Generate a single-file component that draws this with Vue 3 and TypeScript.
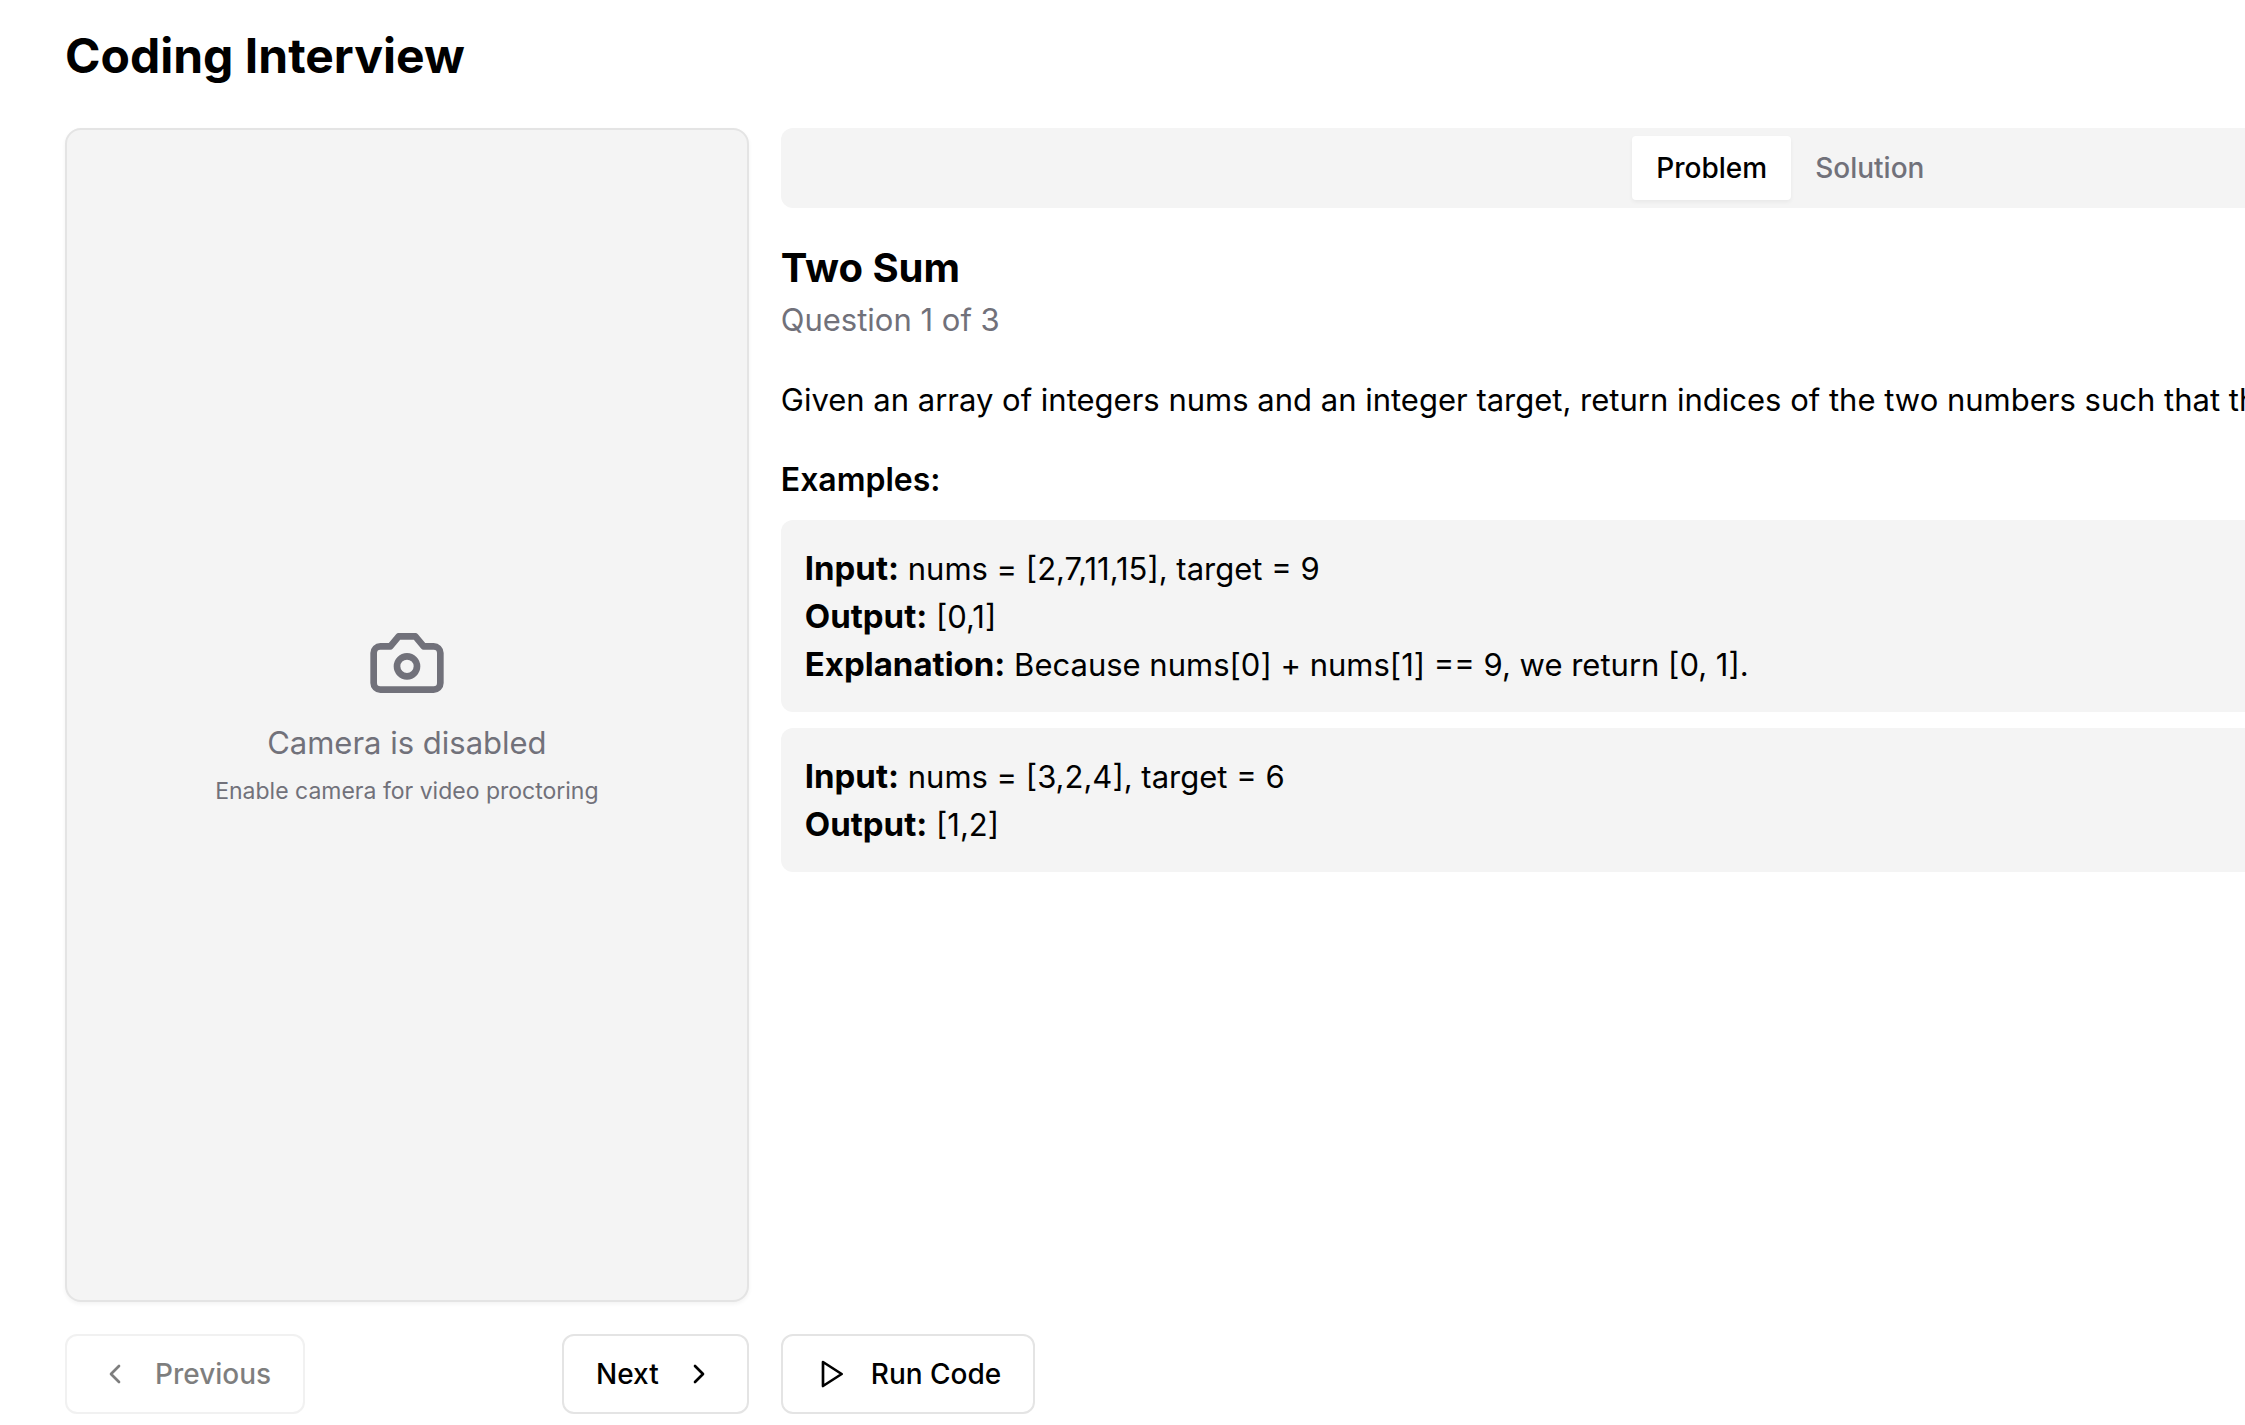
<script setup lang="ts">
import { ref } from 'vue'

interface Example {
  input: string
  output: string
  explanation?: string
}

type Tab = 'Problem' | 'Solution'

const tabs: Tab[] = ['Problem', 'Solution']
const activeTab = ref<Tab>('Problem')

const examples: Example[] = [
  {
    input: 'nums = [2,7,11,15], target = 9',
    output: '[0,1]',
    explanation: 'Because nums[0] + nums[1] == 9, we return [0, 1].',
  },
  { input: 'nums = [3,2,4], target = 6', output: '[1,2]' },
]
</script>

<template>
  <div class="viewport">
    <div class="page">
      <h1 class="title">Coding Interview</h1>

      <main class="columns">
        <section class="side">
          <div class="camera">
            <svg class="camera-icon" viewBox="0 0 24 24" aria-hidden="true">
              <path d="M14.5 4h-5L7 7H4a2 2 0 0 0-2 2v9a2 2 0 0 0 2 2h16a2 2 0 0 0 2-2V9a2 2 0 0 0-2-2h-3l-2.5-3z" />
              <circle cx="12" cy="13" r="3" />
            </svg>
            <p class="camera-title">Camera is disabled</p>
            <p class="camera-note">Enable camera for video proctoring</p>
          </div>
          <div class="nav">
            <button class="btn" type="button" disabled>
              <svg class="icon" viewBox="0 0 24 24" aria-hidden="true"><path d="m15 18-6-6 6-6" /></svg>
              Previous
            </button>
            <button class="btn" type="button">
              Next
              <svg class="icon" viewBox="0 0 24 24" aria-hidden="true"><path d="m9 18 6-6-6-6" /></svg>
            </button>
          </div>
        </section>

        <section class="work">
          <div class="tabs" role="tablist">
            <button
              v-for="tab in tabs"
              :key="tab"
              type="button"
              role="tab"
              class="tab"
              :class="{ active: activeTab === tab }"
              :aria-selected="activeTab === tab"
              @click="activeTab = tab"
            >{{ tab }}</button>
          </div>

          <div class="problem">
            <h2 class="problem-title">Two Sum</h2>
            <p class="progress">Question 1 of 3</p>
            <p class="statement">Given an array of integers nums and an integer target, return indices of the two numbers such that they add up to target.</p>
            <h3 class="examples-title">Examples:</h3>
            <div class="examples">
              <div v-for="example in examples" :key="example.input" class="example">
                <p><strong>Input:</strong> {{ example.input }}</p>
                <p><strong>Output:</strong> {{ example.output }}</p>
                <p v-if="example.explanation"><strong>Explanation:</strong> {{ example.explanation }}</p>
              </div>
            </div>
          </div>

          <div class="actions">
            <button class="btn" type="button">
              <svg class="icon" viewBox="0 0 24 24" aria-hidden="true"><polygon points="6 3 20 12 6 21 6 3" /></svg>
              Run Code
            </button>
          </div>
        </section>
      </main>
    </div>
  </div>
</template>

<style>
body {
  background: #fff;
}
</style>

<style scoped>
.viewport {
  overflow: hidden;
  font-family: Inter, "Liberation Sans", sans-serif;
  font-size: 31px;
  line-height: 48px;
  color: #000;
}

h1,
h2,
h3,
p {
  margin: 0;
}

/* The workspace is wider than the window and runs off its right edge. */
.page {
  box-sizing: border-box;
  width: calc(100% + 620px);
  min-height: 100vh;
  padding: 24px 65px 11px;
  display: flex;
  flex-direction: column;
  gap: 40px;
}

.title {
  font-size: 48px;
  line-height: 64px;
  font-weight: 700;
}

.columns {
  flex: 1;
  display: flex;
  gap: 32px;
}

.side {
  width: 25%;
  display: flex;
  flex-direction: column;
  gap: 32px;
}

.camera {
  flex: 1;
  display: flex;
  flex-direction: column;
  align-items: center;
  justify-content: center;
  border: 2px solid #e4e4e4;
  border-radius: 16px;
  background: #f4f4f4;
  box-shadow: 0 2px 4px rgba(0, 0, 0, 0.05);
  color: #71717a;
}

.camera-icon,
.icon {
  fill: none;
  stroke: currentColor;
  stroke-width: 2;
  stroke-linecap: round;
  stroke-linejoin: round;
}

.camera-icon {
  width: 80px;
  height: 80px;
  margin-bottom: 16px;
}

.camera-note {
  margin-top: 8px;
  font-size: 23px;
  line-height: 32px;
}

.nav {
  display: flex;
  justify-content: space-between;
}

.btn {
  box-sizing: border-box;
  height: 80px;
  padding: 0 32px;
  display: inline-flex;
  align-items: center;
  gap: 24px;
  border: 2px solid #e4e4e4;
  border-radius: 12px;
  background: #fff;
  color: #000;
  font-family: inherit;
  font-size: 28px;
  line-height: 40px;
  font-weight: 500;
}

.btn:disabled {
  opacity: 0.5;
}

.icon {
  width: 32px;
  height: 32px;
}

.work {
  flex: 1;
  display: flex;
  flex-direction: column;
}

.tabs {
  display: flex;
  justify-content: center;
  padding: 8px;
  border-radius: 12px;
  background: #f4f4f4;
}

.tab {
  padding: 12px 24px;
  border: 0;
  border-radius: 4px;
  background: transparent;
  color: #71717a;
  font-family: inherit;
  font-size: 28px;
  line-height: 40px;
  font-weight: 500;
}

.tab.active {
  background: #fff;
  color: #000;
  box-shadow: 0 2px 4px rgba(0, 0, 0, 0.05);
}

.problem {
  flex: 1;
  padding-top: 32px;
}

.problem-title {
  font-size: 40px;
  line-height: 56px;
  font-weight: 700;
}

.progress {
  color: #71717a;
}

.statement {
  margin: 32px 0;
}

.examples-title {
  margin-bottom: 16px;
  font-size: 32px;
  font-weight: 600;
}

.examples {
  display: flex;
  flex-direction: column;
  gap: 16px;
}

.example {
  padding: 24px;
  border-radius: 12px;
  background: #f4f4f4;
}

.example p {
  height: 48px;
}

.example strong {
  font-size: 33px;
  font-weight: 700;
}

.actions {
  display: flex;
}
</style>
